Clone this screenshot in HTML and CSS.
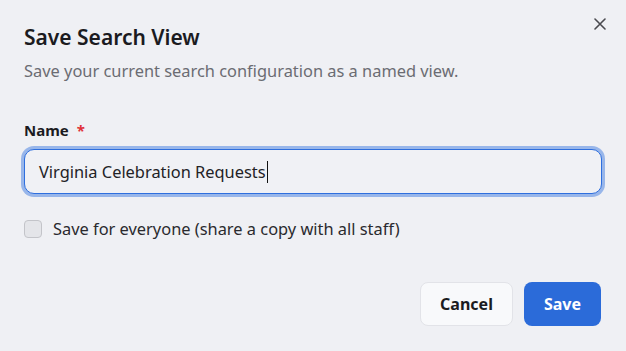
FILE: index.html
```html
<!DOCTYPE html>
<html>
<head>
<meta charset="utf-8">
<link rel="stylesheet" href="styles.css">
</head>
<body>
<div class="dialog">
  <button class="close" aria-label="Close">
    <svg width="12" height="12" viewBox="0 0 12 12"><path d="M1 1L11 11M11 1L1 11" stroke="#4a4a4f" stroke-width="1.6" stroke-linecap="round"/></svg>
  </button>
  <h1 class="title">Save Search View</h1>
  <p class="subtitle">Save your current search configuration as a named view.</p>
  <label class="label">Name <span class="req">*</span></label>
  <div class="input">Virginia Celebration Requests<span class="caret"></span></div>
  <label class="check-row"><span class="checkbox"></span><span class="check-text">Save for everyone (share a copy with all staff)</span></label>
  <div class="actions">
    <button class="btn btn-cancel">Cancel</button>
    <button class="btn btn-save">Save</button>
  </div>
</div>
</body>
</html>
```
FILE: styles.css
```css
html, body { margin: 0; padding: 0; }
body {
  background: #eff0f4;
  font-family: "Noto Sans", "Open Sans", sans-serif;
  color: #1b1b1f;
  width: 626px;
  height: 351px;
  overflow: hidden;
}
.dialog {
  position: relative;
  padding: 22px 24px 0 24px;
  display: flex;
  flex-direction: column;
}
.close {
  position: absolute;
  top: 17px;
  right: 19px;
  width: 14px;
  height: 14px;
  padding: 0;
  border: none;
  background: none;
  display: flex;
  align-items: center;
  justify-content: center;
}
.title {
  margin: 0;
  font-size: 21px;
  font-weight: 600;
  line-height: 30px;
  letter-spacing: 0;
}
.subtitle {
  margin: 8px 0 0 0;
  font-size: 16.4px;
  line-height: 22px;
  color: #6b6c72;
}
.label {
  margin-top: 37px;
  font-size: 15px;
  font-weight: 700;
  line-height: 22px;
}
.req { color: #e0313a; margin-left: 4px; }
.input {
  margin-top: 8px;
  height: 45px;
  box-sizing: border-box;
  border: 1.5px solid #2f6fde;
  border-radius: 10px;
  box-shadow: 0 0 0 3px rgba(47, 111, 222, 0.45);
  background: #f0f1f5;
  padding: 0 14px;
  display: flex;
  align-items: center;
  font-size: 16.4px;
  color: #222226;
}
.caret { width: 1px; height: 22px; background: #111; margin-left: 1px; }
.check-row {
  margin-top: 23px;
  display: flex;
  align-items: center;
  gap: 11px;
  font-size: 16.4px;
  color: #2a2a2e;
}
.checkbox {
  width: 18px;
  height: 18px;
  box-sizing: border-box;
  border: 1.5px solid #c3c4c9;
  border-radius: 4px;
  background: #e4e5e9;
}
.actions {
  margin-top: 42px;
  display: flex;
  justify-content: flex-end;
  gap: 11px;
  padding-right: 1px;
}
.btn {
  height: 44px;
  border-radius: 8px;
  font-family: inherit;
  font-size: 16px;
  font-weight: 700;
  padding: 0 20px;
}
.btn-cancel {
  background: #f8f9fb;
  border: 1px solid #e2e3e8;
  color: #1b1b1f;
  padding: 0 19px;
}
.btn-save {
  background: #2b6bd9;
  border: none;
  color: #ffffff;
}
```
